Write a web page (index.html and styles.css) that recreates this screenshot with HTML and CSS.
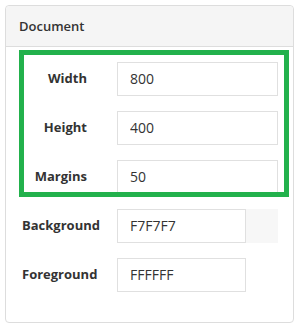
FILE: index.html
```html
<!DOCTYPE html>
<html lang="en">
<head>
  <meta charset="UTF-8">
  <title>Document settings</title>
  <link rel="stylesheet" href="styles.css">
</head>
<body>
  <div class="panel">
    <div class="panel-heading">Document</div>

    <div class="panel-body">
      <div class="group highlight">
        <div class="row">
          <label class="label">Width</label>
          <input class="field" type="text" value="800">
        </div>
        <div class="row">
          <label class="label">Height</label>
          <input class="field" type="text" value="400">
        </div>
        <div class="row">
          <label class="label">Margins</label>
          <input class="field" type="text" value="50">
        </div>
      </div>

      <div class="row">
        <label class="label">Background</label>
        <div class="color-group">
          <input class="field color" type="text" value="F7F7F7">
          <span class="swatch"></span>
        </div>
      </div>
      <div class="row">
        <label class="label">Foreground</label>
        <div class="color-group">
          <input class="field color" type="text" value="FFFFFF">
        </div>
      </div>
    </div>
  </div>
</body>
</html>
```

FILE: styles.css
```css
body {
  margin: 0;
  padding: 0;
  background: #fff;
  font-family: "Open Sans", "Liberation Sans", sans-serif;
  color: #333;
}

.panel {
  margin: 5px;
  width: 287px;
  border: 1px solid #ddd;
  border-radius: 4px;
  background: #fff;
}

.panel-heading {
  height: 40px;
  line-height: 40px;
  padding-left: 13px;
  font-size: 13px;
  font-weight: 600;
  background: #f5f5f5;
  border-bottom: 1px solid #ddd;
  border-radius: 4px 4px 0 0;
}

.panel-body {
  display: flex;
  flex-direction: column;
  gap: 15px;
  padding: 6px 15px 30px 16px;
}

.group {
  display: flex;
  flex-direction: column;
  gap: 15px;
  padding-top: 9px;
  margin-right: -8px;
}

.highlight {
  outline: 5px solid #22b14c;
  outline-offset: -2px;
}

.row {
  display: flex;
  align-items: center;
  height: 34px;
}

.label {
  width: 95px;
  flex: none;
  padding-bottom: 3px;
  box-sizing: border-box;
  font-size: 13px;
  font-weight: 700;
  color: #333;
}

.group .label {
  text-align: right;
  padding-right: 30px;
}

.field {
  box-sizing: border-box;
  width: 161px;
  height: 34px;
  margin: 0;
  padding: 0 12px 1px;
  border: 1px solid #e0e0e0;
  border-radius: 0;
  font-family: "Open Sans", "Liberation Sans", sans-serif;
  font-size: 14px;
  color: #333;
  background: #fff;
  outline: none;
}

.color-group {
  display: flex;
  height: 34px;
}

.field.color {
  width: 129px;
}

.swatch {
  width: 32px;
  height: 34px;
  background: #f7f7f7;
}
```
